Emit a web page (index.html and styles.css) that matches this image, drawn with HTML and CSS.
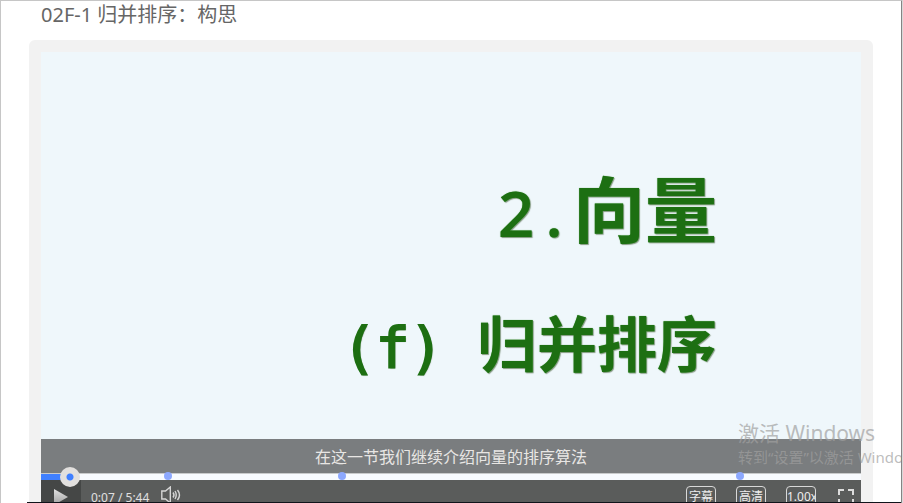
FILE: index.html
```html
<!DOCTYPE html>
<html lang="zh-CN">
<head>
    <meta charset="UTF-8">
    <meta name="viewport" content="width=device-width, initial-scale=1.0">
    <title>02F-1 归并排序：构思</title>
    <link rel="stylesheet" href="styles.css">
</head>
<body>
    <main class="page">
        <h1 class="title">02F-1 归并排序：构思</h1>
        <div class="player">
            <div class="slide">
                <p class="chapter"><span class="digit">2</span><span class="digit">.</span>向量</p>
                <p class="section"><span class="mono">(f) </span>归并排序</p>
            </div>
            <p class="caption">在这一节我们继续介绍向量的排序算法</p>
            <div class="progress">
                <input class="seek" type="range" min="0" max="344" value="8" aria-label="播放进度">
                <button class="mark" style="left: 15.5%" aria-label="标记 1"></button>
                <button class="mark" style="left: 36.7%" aria-label="标记 2"></button>
                <button class="mark" style="left: 85.2%" aria-label="标记 3"></button>
            </div>
            <div class="controls">
                <button class="play" aria-label="播放">
                    <svg width="16" height="18" viewBox="0 0 16 18">
                        <defs>
                            <linearGradient id="shade" x1="0" y1="0" x2="0" y2="1">
                                <stop offset="0" stop-color="#e2e2e2"/>
                                <stop offset="1" stop-color="#a0a0a0"/>
                            </linearGradient>
                        </defs>
                        <path d="M1 1L15 9L1 17Z" fill="url(#shade)"/>
                    </svg>
                </button>
                <span class="time">0:07 / 5:44</span>
                <button class="volume" aria-label="音量">
                    <svg width="20" height="18" viewBox="0 0 20 18" fill="none" stroke="#d6d6d6" stroke-width="1.4">
                        <path d="M.8 5H4.5L9.3 1V17L4.5 13H.8Z"/>
                        <path d="M12 6.5Q14 9 12 11.5"/>
                        <path d="M14 5Q16.500 9 14 13"/>
                        <path d="M16.500 4Q20.500 9 16.500 14"/>
                    </svg>
                </button>
                <div class="options">
                    <button class="option">字幕</button>
                    <button class="option">高清</button>
                    <button class="option">1.00x</button>
                </div>
                <button class="fullscreen" aria-label="全屏">
                    <svg width="16" height="16" viewBox="0 0 16 16" fill="none" stroke="#dcdcdc" stroke-width="2">
                        <path d="M1 6V1H6M10 1H15V6M15 10V15H10M6 15H1V10"/>
                    </svg>
                </button>
            </div>
        </div>
        <div class="watermark">
            <p class="wm-title">激活 Windows</p>
            <p class="wm-text">转到“设置”以激活 Windows。</p>
        </div>
        <div class="edge"></div>
    </main>
</body>
</html>
```

FILE: styles.css
```css
*{
    margin: 0;
    padding: 0;
    box-sizing: border-box;
}

body{
    background-color: #fff;
    font-family: "Noto Sans", "Noto Sans CJK SC", sans-serif;
}

button{
    border: none;
    background: none;
    font-family: inherit;
    cursor: pointer;
}

svg{
    display: block;
}

.page{
    position: relative;
    height: 100vh;
    overflow: hidden;
    padding: 0 28px;
    border-top: 1px solid #c6c6c6;
    border-left: 1px solid #c6c6c6;
    border-right: 2px groove #d8d8d8;
}

.title{
    height: 39px;
    padding-left: 12px;
    line-height: 27px;
    font-size: 20px;
    font-weight: 400;
    color: #666;
}

/* player */
.player{
    padding: 12px;
    border-radius: 6px;
    background-color: #f2f2f2;
}

.slide{
    padding: 112px 144px 50px 0;
    background-color: #eff7fb;
    text-align: right;
    font-weight: 700;
    color: #1d6f12;
    text-shadow: 0 0 1px #4b9a42, 1px 1px 1px #8a9a88;
}

.chapter{
    height: 135px;
    line-height: 90px;
    font-size: 72px;
}

.digit{
    display: inline-block;
    width: 38px;
    font-family: "Open Sans", sans-serif;
    font-size: 64px;
    font-weight: 600;
    text-align: center;
}

.section{
    height: 90px;
    line-height: 90px;
    font-size: 60px;
    white-space: pre;
}

.mono{
    font-family: "DejaVu Sans Mono", monospace;
    font-size: 56px;
    font-weight: 400;
    -webkit-text-stroke: 2px #1d6f12;
}

.caption{
    height: 34px;
    line-height: 36px;
    background-color: #7a7d7f;
    font-size: 16px;
    text-align: center;
    color: #e8e6e4;
}

.progress{
    position: relative;
    display: flex;
    height: 7px;
    border-top: 1px solid #c9cbcc;
    background: linear-gradient(to right, #4080ff 3%, #f8fbff 3%);
}

.seek{
    appearance: none;
    width: 100%;
    height: 6px;
    background: none;
}

.seek::-webkit-slider-thumb{
    appearance: none;
    width: 20px;
    height: 20px;
    border-radius: 50%;
    background: radial-gradient(circle, #4080ff 3px, #e2e0de 4px);
}

.mark{
    position: absolute;
    top: -2px;
    width: 8px;
    height: 8px;
    margin-left: -4px;
    border-radius: 50%;
    background-color: #8ca8ff;
}

.controls{
    display: flex;
    align-items: center;
    height: 34px;
    padding-right: 7px;
    background-color: #5a5c5b;
    color: #e0e0e0;
}

.play{
    display: flex;
    align-items: center;
    justify-content: center;
    width: 40px;
    height: 34px;
    background-color: #454746;
}

.time{
    padding: 0 12px 0 10px;
    font-size: 12px;
}

.volume{
    margin-bottom: 4px;
}

.options{
    display: flex;
    gap: 20px;
    margin-left: auto;
}

.option{
    width: 30px;
    height: 22px;
    overflow: hidden;
    border: 1px solid #d8d8d8;
    border-radius: 4px;
    font-size: 12px;
    line-height: 20px;
    white-space: nowrap;
    color: #ededed;
}

.fullscreen{
    margin-left: 22px;
}

/* activation notice over the page */
.watermark{
    position: absolute;
    left: 737px;
    bottom: 34px;
    white-space: nowrap;
    color: rgba(160, 160, 160, .7);
}

.wm-title{
    font-size: 21px;
    line-height: 24px;
}

.wm-text{
    font-size: 15px;
    line-height: 24px;
}

.edge{
    position: absolute;
    left: 26px;
    right: 0;
    bottom: 0;
    height: 1px;
    background-color: #10131a;
}
```
